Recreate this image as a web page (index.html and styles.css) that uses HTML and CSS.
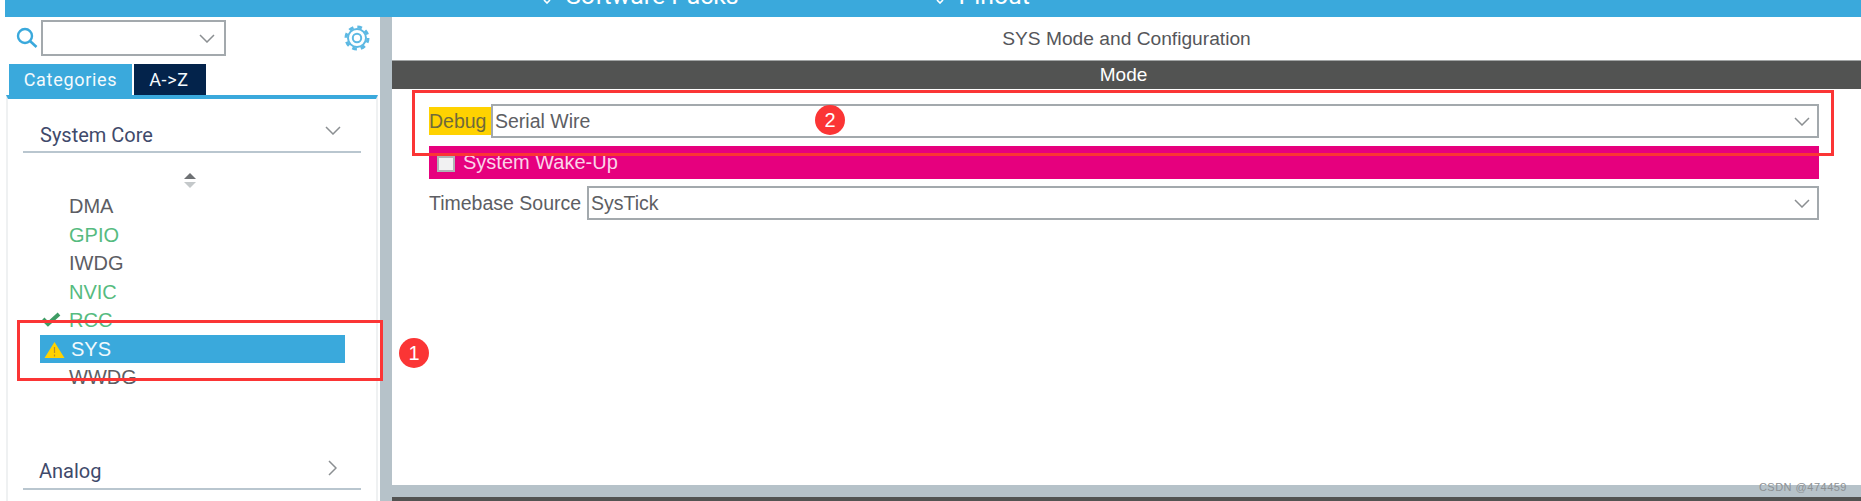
FILE: index.html
```html
<!DOCTYPE html>
<html lang="en">
<head>
<meta charset="utf-8">
<title>SYS Mode and Configuration</title>
<link rel="stylesheet" href="styles.css">
</head>
<body>
<div class="app">
  <header class="topbar">
    <div class="topbar-item topbar-packs"><svg class="topbar-chev" width="10" height="4" viewBox="0 0 10 4"><path d="M2 0l3 3 3-3" fill="none" stroke="#fff" stroke-width="1.600"/></svg><span>Software Packs</span></div>
    <div class="topbar-item topbar-pinout"><svg class="topbar-chev" width="10" height="4" viewBox="0 0 10 4"><path d="M2 0l3 3 3-3" fill="none" stroke="#fff" stroke-width="1.600"/></svg><span>Pinout</span></div>
  </header>
  <div class="workspace">
    <aside class="sidebar">
      <div class="search-row">
        <svg class="search-icon" width="22" height="22" viewBox="0 0 22 22"><circle cx="9" cy="9" r="7" fill="none" stroke="#3aa9dc" stroke-width="2.400"/><path d="M14 14l6.500 6" stroke="#3aa9dc" stroke-width="2.600" fill="none"/></svg>
        <div class="combo"><svg width="16" height="9" viewBox="0 0 16 9"><path d="M1 1l7 7 7-7" fill="none" stroke="#8b8f92" stroke-width="1.500"/></svg></div>
        <svg class="gear" width="26" height="26" viewBox="0 0 26 26"><circle cx="13" cy="13" r="11" fill="none" stroke="#5db9e3" stroke-width="3" stroke-dasharray="4.700 3.940"/><circle cx="13" cy="13" r="9" fill="#fff" stroke="#5db9e3" stroke-width="2"/><circle cx="13" cy="13" r="4.200" fill="none" stroke="#5db9e3" stroke-width="2"/></svg>
      </div>
      <div class="tabs">
        <div class="tab tab-active">Categories</div>
        <div class="tab tab-dark">A-&gt;Z</div>
      </div>
      <div class="tree">
        <div class="group">
          <span>System Core</span>
          <svg width="16" height="9" viewBox="0 0 16 9"><path d="M1 1l7 7 7-7" fill="none" stroke="#8b8f92" stroke-width="1.500"/></svg>
        </div>
        <div class="sorter"><svg width="14" height="17" viewBox="0 0 14 17"><path d="M7 1l6 6H1z" fill="#6e7174"/><path d="M7 16l6-6H1z" fill="#c4c8ca"/></svg></div>
        <ul class="items">
          <li class="item">DMA</li>
          <li class="item item-ok">GPIO</li>
          <li class="item">IWDG</li>
          <li class="item item-ok">NVIC</li>
          <li class="item item-ok"><svg class="mark-check" width="20" height="15" viewBox="0 0 20 15"><path d="M2 7l5 5L18 2" fill="none" stroke="#3e9c64" stroke-width="4"/></svg>RCC</li>
          <li class="item item-selected"><svg class="mark-warn" width="21" height="18" viewBox="0 0 21 18"><path d="M10.500 1l10 16H.5z" fill="#ffd200"/><path d="M10.500 6v6M10.500 13.500v2" stroke="#b48f2a" stroke-width="1.200"/></svg>SYS</li>
          <li class="item">WWDG</li>
        </ul>
        <div class="group group-analog">
          <span>Analog</span>
          <svg width="9" height="16" viewBox="0 0 9 16"><path d="M1 1l7 7-7 7" fill="none" stroke="#8b8f92" stroke-width="1.500"/></svg>
        </div>
      </div>
    </aside>
    <div class="splitter"></div>
    <main class="content">
      <h1 class="title">SYS Mode and Configuration</h1>
      <div class="mode-bar">Mode</div>
      <div class="form">
        <div class="row row-debug">
          <label class="debug-label">Debug</label>
          <div class="select"><span>Serial Wire</span><svg width="16" height="9" viewBox="0 0 16 9"><path d="M1 1l7 7 7-7" fill="none" stroke="#8b8f92" stroke-width="1.500"/></svg></div>
        </div>
        <div class="wake"><span class="checkbox"></span><span>System Wake-Up</span></div>
        <div class="row row-timebase">
          <label class="timebase-label">Timebase Source</label>
          <div class="select"><span>SysTick</span><svg width="16" height="9" viewBox="0 0 16 9"><path d="M1 1l7 7 7-7" fill="none" stroke="#8b8f92" stroke-width="1.500"/></svg></div>
        </div>
      </div>
      <div class="footer"><span class="watermark">CSDN @474459</span></div>
      <div class="bottom-dark"></div>
    </main>
  </div>
  <div class="callout callout-one"></div>
  <div class="badge badge-one">1</div>
  <div class="callout callout-two"></div>
  <div class="badge badge-two">2</div>
</div>
</body>
</html>
```
FILE: styles.css
```css
* { box-sizing: border-box; }
html, body { margin: 0; padding: 0; background: #fff; }
body { overflow: hidden; font-family: "Liberation Sans", Arial, sans-serif; color: #54565a; }
.app { position: relative; width: 1861px; height: 501px; overflow: hidden; display: flex; flex-direction: column; }

.topbar { height: 17px; flex: none; margin-left: 5px; background: #3aa9dc; color: #fff; display: flex; overflow: hidden; font-family: Roboto, sans-serif; font-size: 24.800px; line-height: 24px; }
.topbar-item { display: flex; align-items: flex-start; margin-top: -16px; }
.topbar-chev { margin: 16px 14px 0 0; }
.topbar-packs { margin-left: 537px; }
.topbar-pinout { margin-left: 196px; }

.workspace { flex: 1; min-height: 0; display: flex; }
.sidebar { flex: none; width: 380px; padding-left: 6px; display: flex; flex-direction: column; }
.search-row { height: 47px; flex: none; display: flex; align-items: flex-start; padding-top: 3px; position: relative; }
.search-icon { margin: 7px 0 0 10px; }
.combo { width: 185px; height: 36px; margin-left: 3px; border: 2px solid #a3a9ad; display: flex; align-items: center; justify-content: flex-end; padding-right: 9px; }
.gear { margin: 5px 0 0 118px; }

.tabs { display: flex; height: 31px; flex: none; padding-left: 3px; gap: 2px; font-family: Roboto, sans-serif; font-size: 18px; color: #f4fafd; letter-spacing: .7px; }
.tab { display: flex; align-items: center; justify-content: center; }
.tab-active { width: 123px; background: #3aa9dc; }
.tab-dark { width: 72px; padding-right: 2px; background: #03234b; }

.tree { flex: 1; width: 372px; border-top: 4px solid #3aa9dc; border-left: 2px solid #eff1f2; border-right: 2px solid #eff1f2; }
.group { margin-left: 15px; width: 338px; height: 54px; border-bottom: 2px solid #b9c6cf; padding: 25px 15px 0 17px; display: flex; justify-content: space-between; font-family: Roboto, sans-serif; font-size: 20px; line-height: 22px; color: #3f4a6b; }
.group svg { margin: 2px 5px 0 0; }
.sorter { height: 39px; padding: 19px 0 0 175px; display: flex; }
.items { list-style: none; margin: 0; padding: 0 0 0 32px; }
.item { position: relative; height: 28.500px; width: 305px; padding-left: 29px; font-size: 20px; line-height: 28px; color: #5c5d63; }
.item-ok { color: #56bb80; }
.mark-check { position: absolute; left: 1px; top: 6px; }
.item-selected { background: #3aa9dc; color: #f1f9fd; padding-left: 31px; }
.mark-warn { position: absolute; left: 4px; top: 6px; }
.group-analog { margin-top: 51px; height: 47px; padding-top: 17px; padding-left: 16px; }
.group-analog svg { margin: 0 9px 0 0; }

.splitter { flex: none; width: 12px; background: #b6c2c9; }
.content { flex: 1; min-width: 0; display: flex; flex-direction: column; }
.title { margin: 0; height: 43px; padding-top: 12px; text-align: center; font-size: 19.200px; font-weight: 400; line-height: 20px; color: #55565a; }
.mode-bar { height: 29px; padding-right: 6px; background: #525352; border-top: 1px solid #a2a5a5; color: #fff; text-align: center; font-size: 19px; line-height: 27px; }
.form { flex: 1; padding: 15px 42px 0 37px; }
.row { display: flex; font-size: 19.500px; }
.select { flex: 1; min-width: 0; border: 2px solid #a3a9ad; display: flex; align-items: center; justify-content: space-between; padding: 0 7px 0 2px; color: #5d5e63; }
.row-debug { height: 34px; }
.debug-label { margin-top: 3px; height: 28px; background: #ffd200; width: 62px; line-height: 28px; padding-left: 0; color: #6f6a3b; }
.wake { margin-top: 8px; height: 33px; background: #e6007e; color: #fbd3e8; display: flex; align-items: center; font-size: 20px; }
.checkbox { width: 18px; height: 16px; margin: 2px 8px 0 8px; background: #f1f1f2; border: 2px solid #b0b2b5; }
.row-timebase { margin-top: 7px; height: 34px; }
.timebase-label { width: 158px; line-height: 34px; color: #5d5e63; }

.footer { flex: none; height: 12px; background: #b6c2c9; position: relative; }
.watermark { position: absolute; right: 14px; top: -5px; font-size: 11px; line-height: 14px; letter-spacing: .5px; color: #8d9194; }
.bottom-dark { flex: none; height: 4px; background: #525352; }

.callout { position: absolute; border: 3px solid #fb3535; }
.callout-one { left: 17px; top: 320px; width: 366px; height: 61px; }
.callout-two { left: 412px; top: 90px; width: 1422px; height: 66px; }
.badge { position: absolute; width: 30px; height: 30px; border-radius: 50%; background: #fb3535; color: #fff; font-size: 20px; line-height: 30px; text-align: center; }
.badge-one { left: 399px; top: 338px; }
.badge-two { left: 815px; top: 105px; }
```
